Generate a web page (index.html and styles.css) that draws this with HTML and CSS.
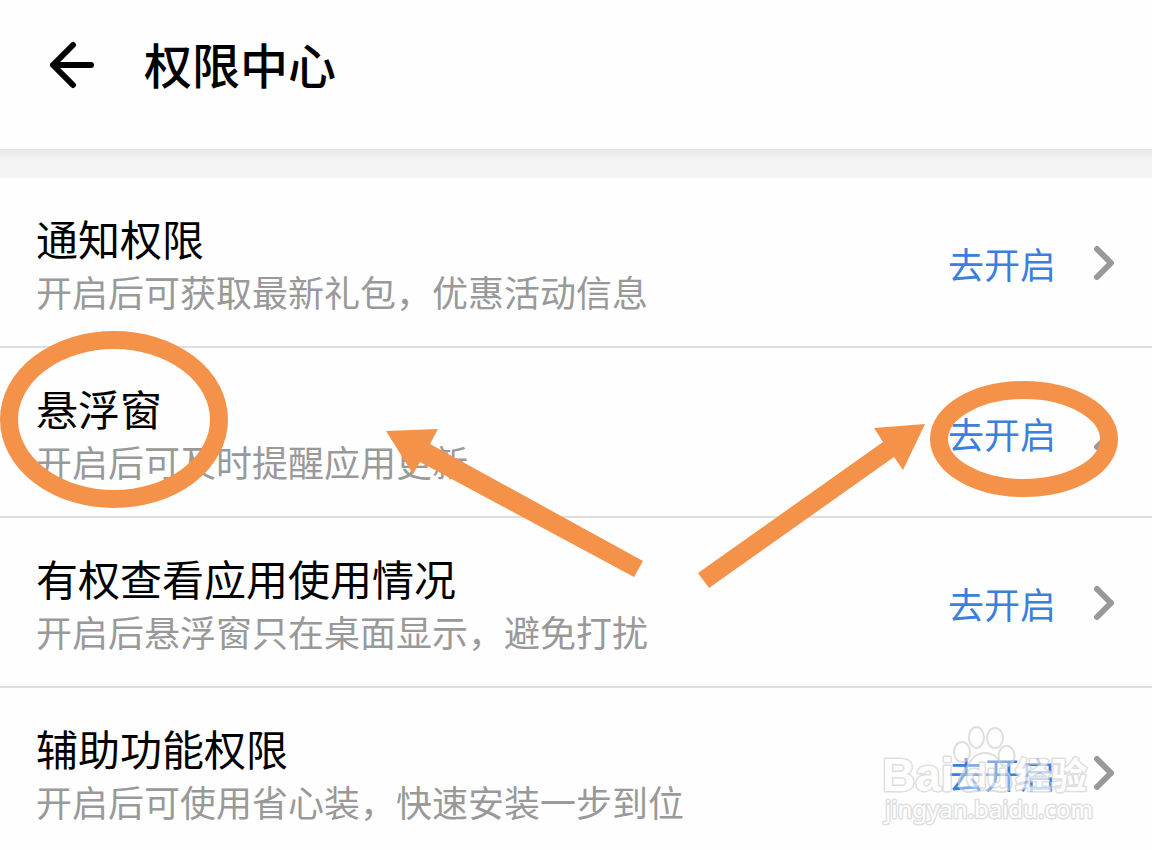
FILE: index.html
```
<!DOCTYPE html>
<html lang="zh-CN">
<head>
<meta charset="utf-8">
<meta name="viewport" content="width=device-width, initial-scale=1">
<title>权限中心</title>
<link rel="stylesheet" href="styles.css">
</head>
<body>
<header class="header">
  <button class="back" type="button" aria-label="返回">
    <svg class="back-icon" viewBox="0 0 48 48" aria-hidden="true"><path d="M25 4 5 24 25 44M5 24H43"/></svg>
  </button>
  <h1 class="page-title">权限中心</h1>
</header>
<main>
  <ul class="list">
    <li class="row">
      <div class="info"><h2 class="name">通知权限</h2><p class="desc">开启后可获取最新礼包，优惠活动信息</p></div>
      <button class="action" type="button">去开启<svg class="chevron" viewBox="0 0 24 36" aria-hidden="true"><path d="M5 4 19 18 5 32"/></svg></button>
    </li>
    <li class="row">
      <div class="info"><h2 class="name">悬浮窗</h2><p class="desc">开启后可及时提醒应用更新</p></div>
      <button class="action" type="button">去开启<svg class="chevron" viewBox="0 0 24 36" aria-hidden="true"><path d="M5 4 19 18 5 32"/></svg></button>
    </li>
    <li class="row">
      <div class="info"><h2 class="name">有权查看应用使用情况</h2><p class="desc">开启后悬浮窗只在桌面显示，避免打扰</p></div>
      <button class="action" type="button">去开启<svg class="chevron" viewBox="0 0 24 36" aria-hidden="true"><path d="M5 4 19 18 5 32"/></svg></button>
    </li>
    <li class="row">
      <div class="info"><h2 class="name">辅助功能权限</h2><p class="desc">开启后可使用省心装，快速安装一步到位</p></div>
      <button class="action" type="button">去开启<svg class="chevron" viewBox="0 0 24 36" aria-hidden="true"><path d="M5 4 19 18 5 32"/></svg></button>
    </li>
  </ul>
</main>
<svg class="overlay" viewBox="0 0 1152 850">
  <g class="rings">
    <ellipse cx="114" cy="419.500" rx="105" ry="79.500"/>
    <ellipse cx="1024" cy="439" rx="85" ry="49"/>
  </g>
  <g class="arrows">
    <path d="M386 431 438 429 430 444 643 561 634 577 420 462 413 474Z"/>
    <path d="M925 424 874 428 883 442 698 573 709 588 894 457 903 470Z"/>
  </g>
  <g class="watermark">
    <g class="paw">
      <path d="M985 753C975 753 971 760 967 767C963 773 958 777 959 784C960 793 969 793 976 791C982 790 989 790 995 791C1003 793 1011 792 1012 784C1012 776 1007 773 1003 767C999 760 995 753 985 753Z"/>
      <ellipse cx="976.500" cy="737.500" rx="7.500" ry="10.500"/>
      <ellipse cx="995" cy="738" rx="8" ry="10"/>
      <ellipse cx="962" cy="752" rx="8" ry="10"/>
      <ellipse cx="1006.500" cy="756" rx="8" ry="10"/>
    </g>
    <text class="mark-brand" x="882" y="791">Bai</text>
    <text class="mark-du" x="966" y="787">du</text>
    <text class="mark-cn" x="1015" y="789">经验</text>
    <text class="mark-url" x="885" y="818">jingyan.baidu.com</text>
  </g>
</svg>
</body>
</html>
```
FILE: styles.css
```
* {
  box-sizing: border-box;
}

body {
  position: relative;
  margin: 0;
  background: #fefefe;
  color: #000;
  font-family: "Noto Sans CJK SC", sans-serif;
}

button {
  border: 0;
  padding: 0;
  background: none;
  font: inherit;
  cursor: pointer;
}

.header {
  display: flex;
  align-items: flex-end;
  gap: 48px;
  padding: 27px 48px 50px;
}

.back {
  display: flex;
  padding-bottom: 10px;
}

.back-icon {
  width: 48px;
  height: 48px;
  fill: none;
  stroke: #000;
  stroke-width: 6;
  stroke-linecap: round;
  stroke-linejoin: round;
}

.page-title {
  margin: 0;
  font-size: 48px;
  font-weight: 500;
  line-height: 72px;
}

main {
  padding-top: 29px;
  background: linear-gradient(#e6e6e6, #f4f4f4 10px);
}

.list {
  margin: 0;
  padding: 0;
  list-style: none;
  background: #fefefe;
}

.row {
  display: flex;
  align-items: center;
  justify-content: space-between;
  gap: 24px;
  padding: 33px 36px 29px;
  border-bottom: 2px solid #dedede;
}

.row:last-child {
  padding-bottom: 22px;
  border-bottom: 0;
}

.name {
  margin: 0;
  font-size: 42px;
  font-weight: 400;
  line-height: 54px;
}

.desc {
  margin: 0;
  color: #999;
  font-size: 36px;
  line-height: 52px;
}

.action {
  display: flex;
  align-items: center;
  gap: 36px;
  flex: none;
  padding-bottom: 2px;
  color: #3a80dc;
  font-size: 36px;
  line-height: 52px;
}

.chevron {
  width: 24px;
  height: 36px;
  fill: none;
  stroke: #999;
  stroke-width: 6;
  stroke-linecap: round;
  stroke-linejoin: round;
}

.overlay {
  position: absolute;
  top: 0;
  left: 0;
  width: 100%;
  pointer-events: none;
}

.rings {
  fill: none;
  stroke: #f4924a;
  stroke-width: 18;
}

.arrows {
  fill: #f4924a;
}

.watermark {
  fill: #fff;
  stroke: #d2d2d2;
  stroke-width: 3;
  stroke-linejoin: round;
  paint-order: stroke;
  opacity: 0.7;
}

.paw {
  fill: rgba(255, 255, 255, 0.5);
  stroke-width: 2;
  paint-order: normal;
}

.mark-brand {
  font: 700 46px "Liberation Sans", sans-serif;
}

.mark-du {
  font: 700 34px "Liberation Sans", sans-serif;
}

.mark-cn {
  font: 700 36px "Noto Sans CJK SC", sans-serif;
}

.mark-url {
  font: 400 24px "Noto Sans", sans-serif;
}
```
